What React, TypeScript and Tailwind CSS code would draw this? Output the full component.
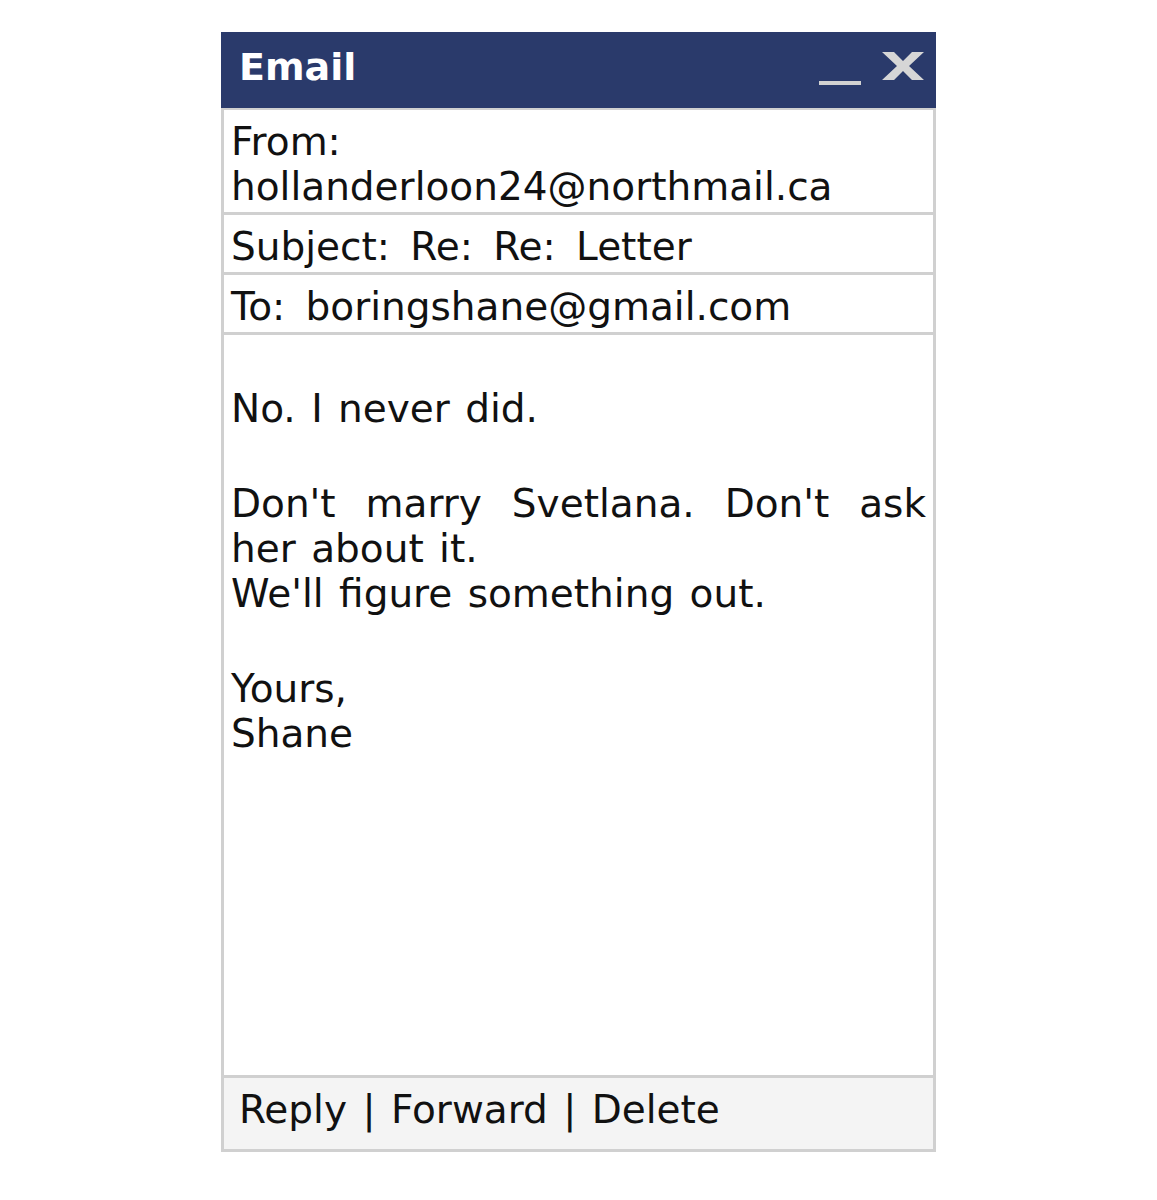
const font = { fontFamily: '"DejaVu Sans", Verdana, sans-serif' };

function Row({ children, className = '' }: { children: React.ReactNode; className?: string }) {
  return (
    <div className={`border-b-[3px] border-[#d0d0d0] pl-[7px] pr-[7px] pt-[9px] pb-[3px] ${className}`}>
      {children}
    </div>
  );
}

export default function App() {
  return (
    <div className="min-h-[1200px] bg-white pt-[32px]" style={font}>
      <div className="ml-[221px] w-[715px] text-[39px] leading-[45px] text-[#111] [word-spacing:3px]">
        {/* title bar */}
        <div className="flex h-[76px] items-center justify-between bg-[#2a3a6b] pl-[18px] pr-[12px]">
          <span className="pb-[6px] text-[38px] font-bold text-white [word-spacing:0px]">Email</span>
          <div className="flex items-end gap-[21px] pb-[4px]">
            <div className="mt-[30px] h-[4px] w-[42px] bg-[#d2d2d2]" />
            <svg width="42" height="28" viewBox="0 0 42 28" className="mb-[5px]">
              <polygon
                fill="#d6d6d6"
                points="0,0 12,0 21,9 30,0 42,0 27,14 42,28 30,28 21,19 12,28 0,28 15,14"
              />
            </svg>
          </div>
        </div>

        <div className="border-x-[3px] border-t-[2px] border-[#d0d0d0]">
          <Row>
            <div>From:</div>
            <div>hollanderloon24@northmail.ca</div>
          </Row>
          <Row className="[word-spacing:8px]">Subject: Re: Re: Letter</Row>
          <Row className="[word-spacing:8px]">To: boringshane@gmail.com</Row>

          <div className="h-[743px] border-b-[3px] border-[#d0d0d0] px-[7px] pt-[6px]">
            <div className="h-[45px]" />
            <div>No. I never did.</div>
            <div className="mt-[50px] text-justify">
              Don't marry Svetlana. Don't ask her about it.
              <br />
              We'll figure something out.
            </div>
            <div className="mt-[50px]">
              Yours,
              <br />
              Shane
            </div>
          </div>

          <div className="h-[74px] border-b-[3px] border-[#d0d0d0] bg-[#f4f4f4] pl-[15px] pt-[9px]">
            Reply | Forward | Delete
          </div>
        </div>
      </div>
    </div>
  );
}
